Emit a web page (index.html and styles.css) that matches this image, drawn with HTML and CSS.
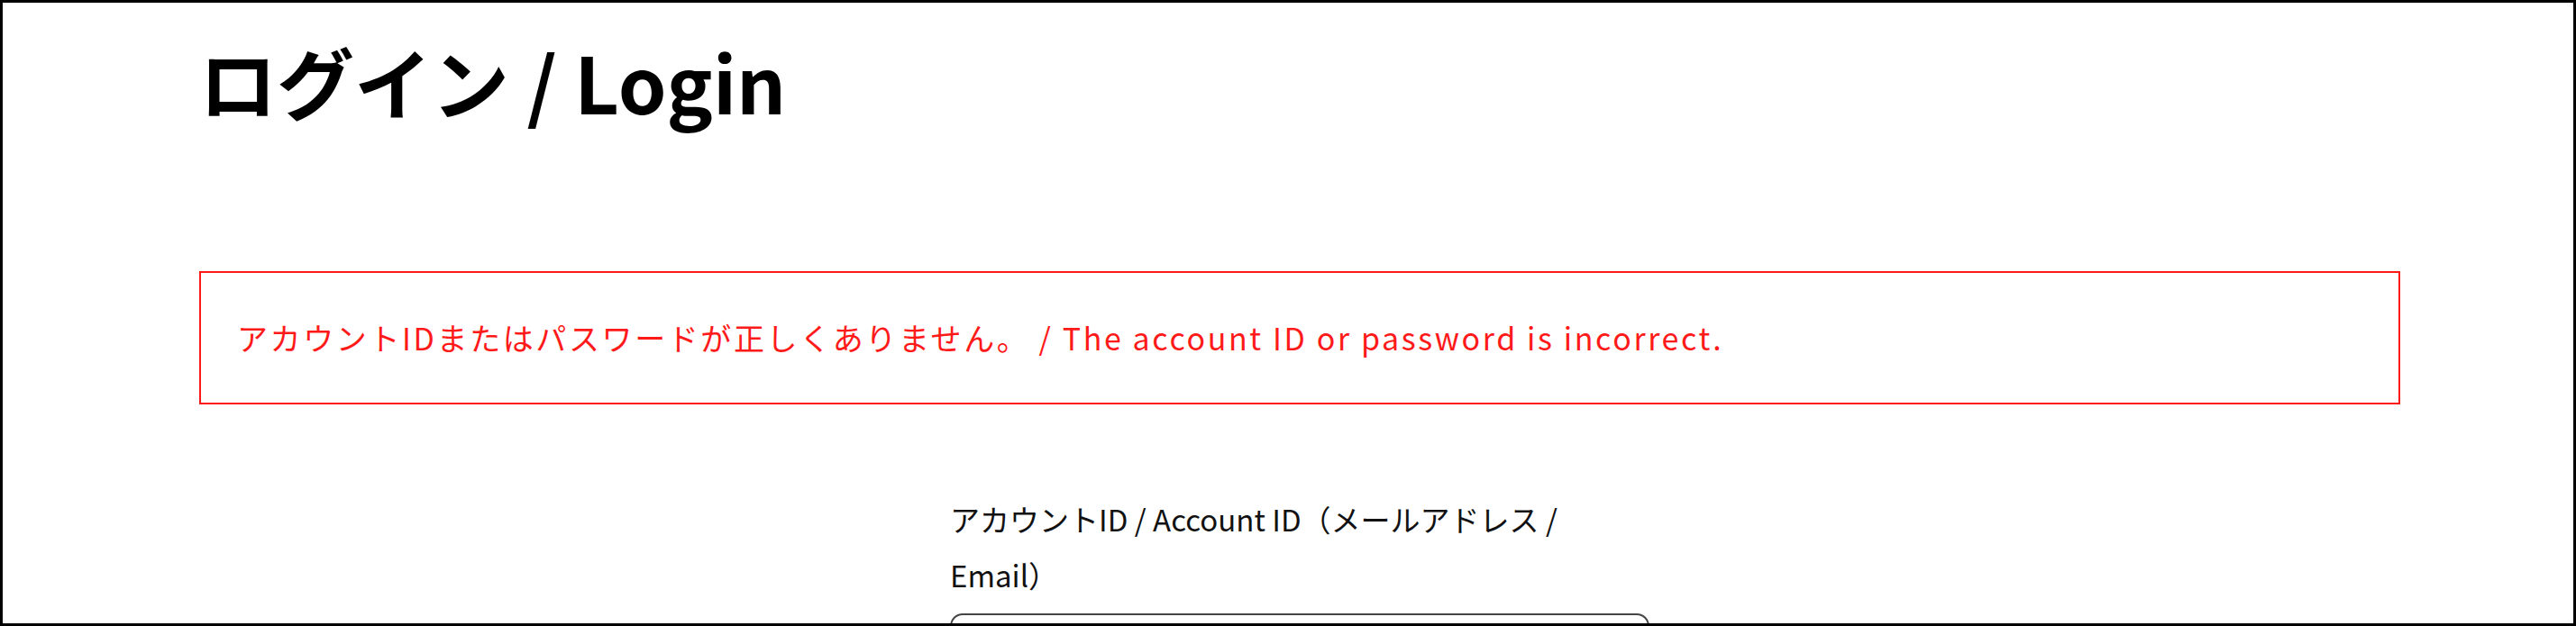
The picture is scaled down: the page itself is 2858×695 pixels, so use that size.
FILE: index.html
```html
<!DOCTYPE html>
<html lang="ja">
<head>
<meta charset="utf-8">
<title>ログイン / Login</title>
<link rel="stylesheet" href="styles.css">
</head>
<body>
<div class="frame">
  <main class="container">
    <h1 class="title">ログイン / Login</h1>
    <div class="error-box">アカウントIDまたはパスワードが正しくありません。 / The account ID or password is incorrect.</div>
    <form class="login-form">
      <label class="field-label" for="account">アカウントID / Account ID（メールアドレス / Email）</label>
      <input class="field-input" id="account" type="text">
    </form>
  </main>
</div>
</body>
</html>
```

FILE: styles.css
```css
html, body {
  margin: 0;
  padding: 0;
  background: #fff;
}

body {
  font-family: "Noto Sans CJK JP", "Noto Sans", sans-serif;
  color: #111;
}

.frame {
  box-sizing: border-box;
  height: 695px;
  border: 3px solid #000;
  overflow: hidden;
}

.container {
  margin: 0 192px 0 218px;
}

.title {
  margin: 35px 0 0 0;
  font-size: 86px;
  line-height: 1.2;
  font-weight: 700;
  color: #000;
}

.error-box {
  margin-top: 160px;
  border: 2px solid #ff1a1a;
  padding: 40px 40px;
  font-size: 34px;
  line-height: 64px;
  letter-spacing: 2.6px;
  color: #ff1a1a;
}

.login-form {
  width: 776px;
  margin: 96px auto 0 auto;
}

.field-label {
  display: block;
  font-size: 33px;
  line-height: 62px;
  color: #111;
}

.field-input {
  display: block;
  box-sizing: border-box;
  width: 100%;
  height: 72px;
  margin-top: 12px;
  border: 2px solid #444;
  border-radius: 14px;
  background: #fff;
}
```
